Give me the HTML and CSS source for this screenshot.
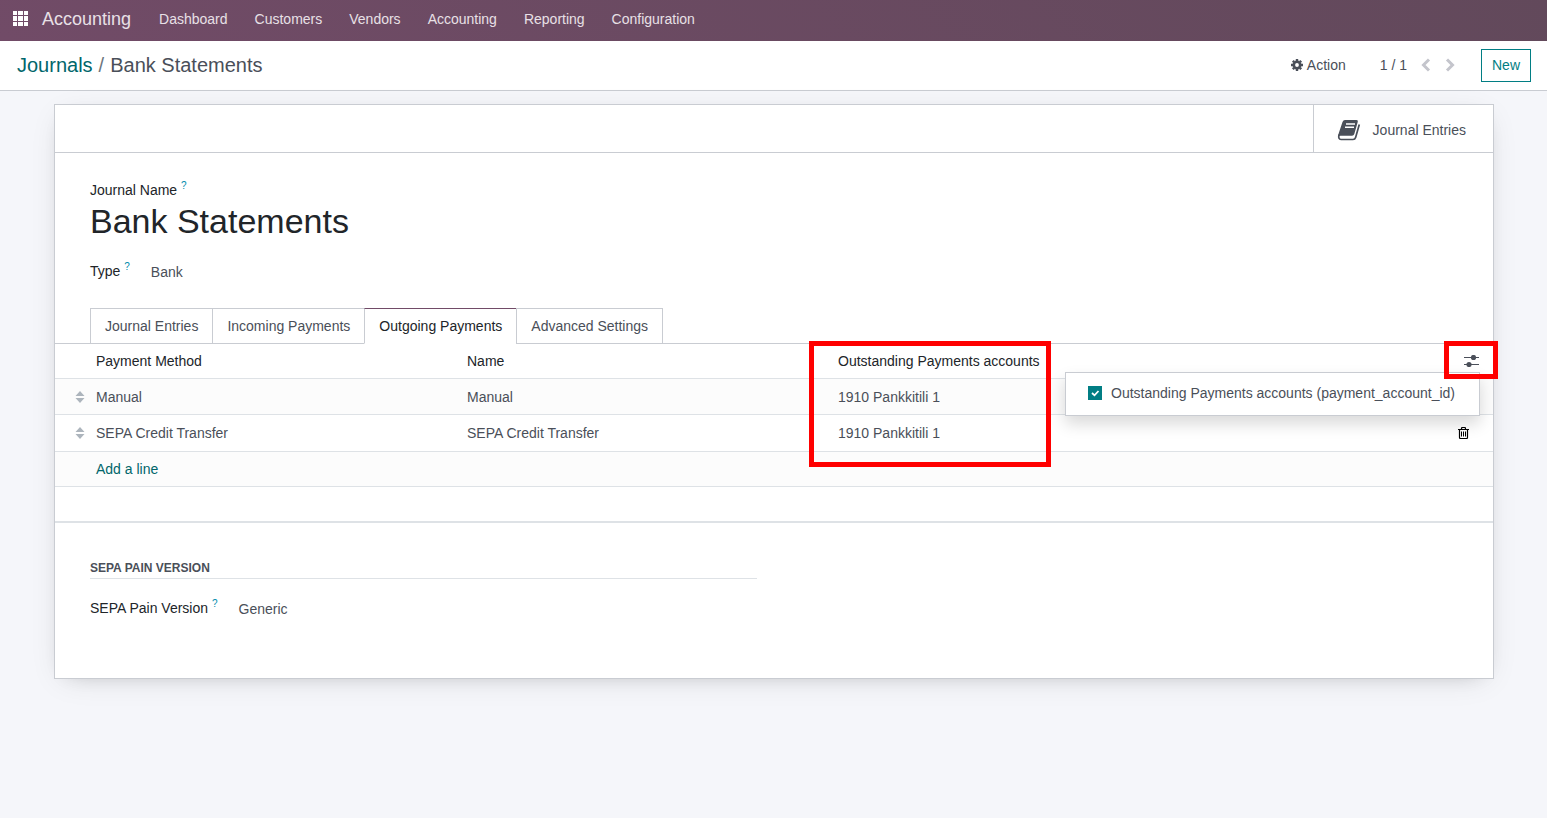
FILE: index.html
```html
<!DOCTYPE html>
<html lang="en">
<head>
    <meta charset="UTF-8">
    <meta name="viewport" content="width=device-width, initial-scale=1.0">
    <title>Bank Statements</title>
    <link rel="stylesheet" href="styles.css">
</head>
<body>
    <header class="navbar">
        <button type="button" class="apps" aria-label="Apps">
            <svg width="15" height="15" viewBox="0 0 15 15" fill="#fff">
                <path d="M0 0h4v4H0zM5 0h5v4H5zM11 0h4v4h-4zM0 5h4v5H0zM5 5h5v5H5zM11 5h4v5h-4zM0 11h4v4H0zM5 11h5v4H5zM11 11h4v4h-4z"/>
            </svg>
        </button>
        <a class="brand" href="#">Accounting</a>
        <nav class="menu">
            <a href="#">Dashboard</a>
            <a href="#">Customers</a>
            <a href="#">Vendors</a>
            <a href="#">Accounting</a>
            <a href="#">Reporting</a>
            <a href="#">Configuration</a>
        </nav>
    </header>

    <div class="control-panel">
        <div class="breadcrumb">
            <a href="#">Journals</a>
            <span class="slash">/</span>
            <span>Bank Statements</span>
        </div>
        <button type="button" class="action">
            <svg width="12" height="12" viewBox="0 0 12 12">
                <circle cx="6" cy="6" r="3.2" fill="none" stroke="#4a4f59" stroke-width="2.6"/>
                <path d="M6 0v2M6 10v2M0 6h2M10 6h2M1.8 1.8l1.4 1.4M8.8 8.8l1.4 1.4M10.2 1.8L8.8 3.2M3.2 8.8l-1.4 1.4" stroke="#4a4f59" stroke-width="2.4"/>
            </svg>
            Action
        </button>
        <div class="pager">
            <span>1 / 1</span>
            <button type="button" aria-label="Previous">
                <svg width="10" height="14" viewBox="0 0 10 14"><path d="M8 1.5L2.5 7 8 12.5" fill="none" stroke="#c4c5cc" stroke-width="3"/></svg>
            </button>
            <button type="button" aria-label="Next">
                <svg width="10" height="14" viewBox="0 0 10 14"><path d="M2 1.5L7.5 7 2 12.5" fill="none" stroke="#c4c5cc" stroke-width="3"/></svg>
            </button>
        </div>
        <button type="button" class="new">New</button>
    </div>

    <main class="content">
        <div class="sheet">
            <div class="button-box">
                <button type="button" class="stat">
                    <svg width="24" height="22" viewBox="0 0 24 22">
                        <path d="M8 1H19.500Q21.300 1 20.800 2.800L17.300 15Q16.800 16.700 15 16.700H3.500Q2 16.700 1.500 17.500Q1 16 1.800 14L5.500 3Q6.200 1 8 1z" fill="#4a4f59"/>
                        <path d="M2 15.500Q1 20.500 4 20.500H16Q18 20.500 18.600 18.500L22.300 5.500" fill="none" stroke="#4a4f59" stroke-width="1.700"/>
                        <path d="M9 5h9M8 8.300h9" stroke="#fff" stroke-width="1.400"/>
                    </svg>
                    Journal Entries
                </button>
            </div>

            <div class="title-block">
                <div class="label">Journal Name <sup>?</sup></div>
                <h1>Bank Statements</h1>
                <div class="field">
                    <span class="label">Type <sup>?</sup></span>
                    <span class="value">Bank</span>
                </div>
            </div>

            <div class="tabs" role="tablist">
                <button type="button" role="tab">Journal Entries</button>
                <button type="button" role="tab">Incoming Payments</button>
                <button type="button" role="tab" class="active" aria-selected="true">Outgoing Payments</button>
                <button type="button" role="tab">Advanced Settings</button>
            </div>

            <div class="list">
                <table>
                    <colgroup>
                        <col class="col-handle">
                        <col class="col-data">
                        <col class="col-data">
                        <col class="col-data">
                        <col>
                    </colgroup>
                    <thead>
                        <tr>
                            <th></th>
                            <th>Payment Method</th>
                            <th>Name</th>
                            <th>Outstanding Payments accounts</th>
                            <th class="tools">
                                <button type="button" aria-label="Optional columns">
                                    <svg width="15" height="12" viewBox="0 0 15 12">
                                        <path d="M0 2.500h15M0 9.500h15" stroke="#4a4f59" stroke-width="1.200"/>
                                        <circle cx="9.500" cy="2.500" r="2.600" fill="#4a4f59"/>
                                        <circle cx="5" cy="9.500" r="2.600" fill="#4a4f59"/>
                                    </svg>
                                </button>
                            </th>
                        </tr>
                    </thead>
                    <tbody>
                        <tr>
                            <td class="handle"><svg width="10" height="12" viewBox="0 0 10 12" fill="#adb5bd"><path d="M5 0l4.500 5h-9zM5 12l4.500-5h-9z"/></svg></td>
                            <td>Manual</td>
                            <td>Manual</td>
                            <td>1910 Pankkitili 1</td>
                            <td></td>
                        </tr>
                        <tr>
                            <td class="handle"><svg width="10" height="12" viewBox="0 0 10 12" fill="#adb5bd"><path d="M5 0l4.500 5h-9zM5 12l4.500-5h-9z"/></svg></td>
                            <td>SEPA Credit Transfer</td>
                            <td>SEPA Credit Transfer</td>
                            <td>1910 Pankkitili 1</td>
                            <td class="trash">
                                <button type="button" aria-label="Delete row">
                                    <svg width="11" height="12" viewBox="0 0 11 12" fill="none" stroke="#000">
                                        <path d="M0 2.500h11M3.500 2.500v-1q0-1 1-1h2q1 0 1 1v1M1.500 2.500v8q0 1 1 1h6q1 0 1-1v-8" stroke-width="1.200"/>
                                        <path d="M3.500 4.500v5M5.500 4.500v5M7.500 4.500v5"/>
                                    </svg>
                                </button>
                            </td>
                        </tr>
                        <tr class="add">
                            <td></td>
                            <td colspan="4"><a href="#">Add a line</a></td>
                        </tr>
                        <tr class="blank">
                            <td colspan="5"></td>
                        </tr>
                    </tbody>
                </table>

                <div class="dropdown">
                    <input type="checkbox" id="payment_account" checked>
                    <label for="payment_account">Outstanding Payments accounts (payment_account_id)</label>
                </div>
                <div class="mark mark-column"></div>
                <div class="mark mark-tools"></div>
            </div>

            <section class="group">
                <h2>SEPA PAIN VERSION</h2>
                <div class="field">
                    <span class="label">SEPA Pain Version <sup>?</sup></span>
                    <span class="value">Generic</span>
                </div>
            </section>
        </div>
    </main>
</body>
</html>
```
FILE: styles.css
```css
* {
    box-sizing: border-box;
}
body {
    margin: 0;
    min-height: 100vh;
    background-color: #f5f6fa;
    color: #4a4f59;
    font-family: "Liberation Sans", Arial, sans-serif;
    font-size: 14px;
    line-height: 20px;
}
button {
    margin: 0;
    padding: 0;
    border: 0;
    background: none;
    color: inherit;
    font: inherit;
    cursor: pointer;
}
a {
    color: #01666b;
    text-decoration: none;
}
svg {
    display: block;
}

/* top bar */
.navbar {
    display: flex;
    align-items: center;
    height: 41px;
    padding: 0 13px 4px;
    background: linear-gradient(45deg, #714b67, #62495b);
}
.navbar a {
    color: #e8e0e6;
}
.brand {
    margin: 0 14px;
    font-size: 18px;
}
.menu {
    display: flex;
    gap: 27px;
    padding-left: 14px;
}

/* breadcrumb and actions */
.control-panel {
    display: flex;
    align-items: center;
    height: 50px;
    padding: 0 16px 1px 17px;
    border-bottom: 1px solid #c9ccd2;
    background-color: #fff;
}
.breadcrumb {
    display: flex;
    flex: 1;
    gap: 6px;
    font-size: 20px;
}
.slash {
    color: #6c757d;
}
.action {
    display: flex;
    align-items: center;
    gap: 4px;
}
.pager {
    display: flex;
    align-items: center;
    gap: 14px;
    margin: 0 26px 0 34px;
}
.new {
    height: 33px;
    padding: 0 10px 1px;
    border: 1px solid #017e84;
    color: #017e84;
}

/* form sheet */
.content {
    padding: 13px 53px 16px 54px;
}
.sheet {
    border: 1px solid #c9ccd2;
    background-color: #fff;
    box-shadow: 0 5px 20px -15px rgba(0, 0, 0, 0.3), 0 6px 30px -8px rgba(0, 0, 0, 0.12);
}
.button-box {
    display: flex;
    justify-content: flex-end;
    height: 48px;
    border-bottom: 1px solid #c9ccd2;
}
.stat {
    display: flex;
    align-items: center;
    gap: 12px;
    padding: 2px 27px 0 23px;
    border-left: 1px solid #c9ccd2;
}
.title-block {
    padding: 27px 35px 26px;
}
.label {
    color: #212529;
}
sup {
    color: #008cad;
    font-size: 10px;
    line-height: 0;
}
h1 {
    margin: 0;
    color: #212529;
    font-size: 34px;
    font-weight: normal;
    line-height: 42px;
}
.field {
    display: flex;
    gap: 21px;
}
.value {
    padding-top: 1px;
}
.title-block .field {
    margin-top: 19px;
}

/* notebook */
.tabs {
    display: flex;
    padding-left: 35px;
    border-bottom: 1px solid #c9ccd2;
}
.tabs button {
    height: 36px;
    margin: 0 0 -1px -1px;
    padding: 0 14px;
    border: 1px solid #c9ccd2;
}
.tabs button:first-child {
    margin-left: 0;
}
.tabs .active {
    border-top-color: #714b67;
    border-bottom-color: #fff;
    background-color: #fff;
    color: #212529;
}
.list {
    position: relative;
}
table {
    width: 100%;
    border-collapse: separate;
    border-spacing: 0;
    table-layout: fixed;
}
.col-handle {
    width: 35px;
}
.col-data {
    width: 25.8%;
}
th, td {
    height: 36px;
    padding: 0 6px;
    border-bottom: 1px solid #dee2e6;
    text-align: left;
}
th {
    height: 35px;
    color: #212529;
    font-weight: normal;
}
tbody tr:nth-child(odd) {
    background-color: #fcfcfc;
}
tbody tr:nth-child(2) td {
    height: 37px;
}
.add td {
    height: 35px;
}
tbody .blank {
    background-color: #fff;
}
.blank td {
    border-bottom-width: 2px;
}
.handle {
    padding: 0 4px 0 20px;
}
.tools button {
    margin-left: auto;
    padding: 0 8px;
    display: block;
}
.trash button {
    margin-left: auto;
    padding: 0 18px;
    display: block;
}
.dropdown {
    position: absolute;
    top: 28px;
    right: 13px;
    display: flex;
    align-items: center;
    gap: 9px;
    height: 44px;
    padding: 0 24px 2px 22px;
    border: 1px solid #c9ccd2;
    background-color: #fff;
    box-shadow: 0 8px 16px rgba(0, 0, 0, 0.15);
}
.dropdown input {
    appearance: none;
    width: 14px;
    height: 14px;
    margin: 0;
    background: #017e84 url("data:image/svg+xml,%3Csvg xmlns='http://www.w3.org/2000/svg' viewBox='0 0 14 14'%3E%3Cpath d='M4 7l2.500 2.300L10.500 5' fill='none' stroke='%23fff' stroke-width='1.800'/%3E%3C/svg%3E");
}
.mark {
    position: absolute;
    top: -3px;
    border: 5px solid #f00;
}
.mark-column {
    left: 754px;
    width: 242px;
    height: 126px;
}
.mark-tools {
    right: -5px;
    width: 54px;
    height: 38px;
}

/* settings group */
.group {
    width: 50%;
    padding: 36px 17px 59px 35px;
}
h2 {
    margin: 0 0 19px;
    border-bottom: 1px solid #dee2e6;
    font-size: 12px;
    line-height: 19px;
}
```
